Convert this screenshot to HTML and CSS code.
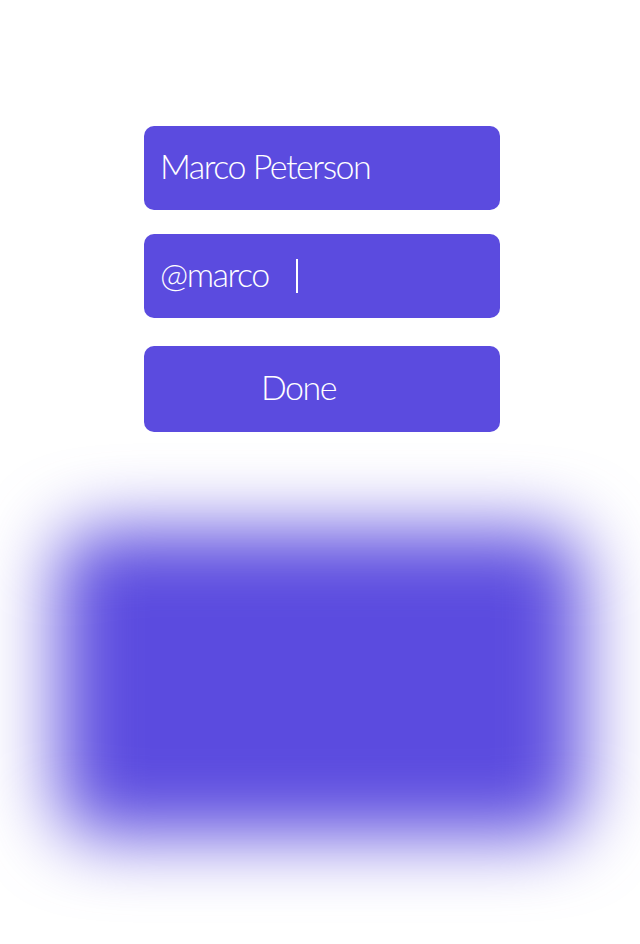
FILE: index.html
```html
<!DOCTYPE html>
<html>
<head>
<meta charset="utf-8">
<link rel="stylesheet" href="styles.css">
</head>
<body>
<div class="page">
  <div class="form">
    <div class="field"><span class="text">Marco Peterson</span></div>
    <div class="field field-handle"><span class="text">@marco</span><span class="caret"></span></div>
    <div class="button"><span class="text">Done</span></div>
  </div>
  <div class="glow"></div>
</div>
</body>
</html>
```
FILE: styles.css
```css
html, body {
  margin: 0;
  padding: 0;
  background: #ffffff;
  overflow: hidden;
}
.page {
  width: 640px;
  height: 944px;
  font-family: "Lato", "Open Sans", sans-serif;
  font-weight: 300;
}
.form {
  display: flex;
  flex-direction: column;
  width: 356px;
  margin-left: 144px;
  padding-top: 126px;
}
.field, .button {
  background: #5b4bdf;
  border-radius: 10px;
  color: #ffffff;
  display: flex;
  align-items: center;
  box-sizing: border-box;
  padding-bottom: 5px;
}
.field {
  height: 84px;
  padding-left: 16px;
}
.field + .field {
  margin-top: 24px;
}
.button {
  height: 86px;
  margin-top: 28px;
  padding-left: 117px;
}
.text {
  font-size: 34px;
  letter-spacing: -1.5px;
  line-height: 1;
}
.caret {
  display: block;
  width: 2px;
  height: 34px;
  background: #ffffff;
  margin-left: 27px;
  margin-top: 4px;
}
.glow {
  width: 524px;
  height: 306px;
  margin-left: 58px;
  margin-top: 98px;
  background: #5b4bdf;
  border-radius: 40px;
  filter: blur(36px);
}
```
